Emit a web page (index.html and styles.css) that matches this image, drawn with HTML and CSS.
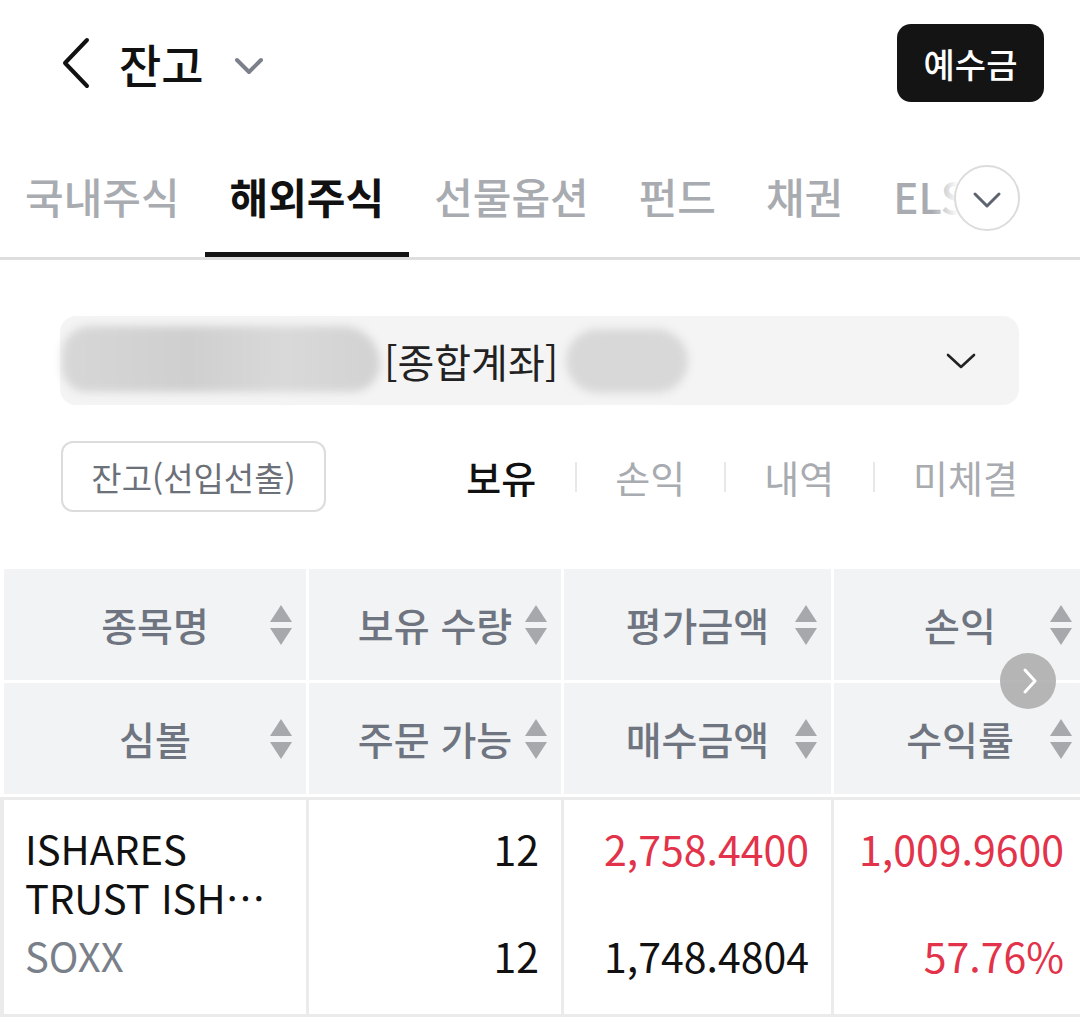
FILE: index.html
```html
<!DOCTYPE html>
<html lang="ko">
<head>
<meta charset="utf-8">
<title>잔고</title>
<link rel="stylesheet" href="styles.css">
</head>
<body>
<div class="app">
  <header class="topbar">
    <div class="topbar-left">
      <svg class="back" width="30" height="52" viewBox="0 0 30 52"><path d="M26 3 L4 26 L26 49" fill="none" stroke="#111" stroke-width="4" stroke-linecap="round" stroke-linejoin="round"/></svg>
      <h1 class="title">잔고</h1>
      <svg class="title-caret" width="30" height="18" viewBox="0 0 30 18"><path d="M3 3 L15 15 L27 3" fill="none" stroke="#7b818b" stroke-width="4" stroke-linecap="round" stroke-linejoin="round"/></svg>
    </div>
    <button class="deposit">예수금</button>
  </header>

  <nav class="tabs">
    <div class="tab-list">
      <span class="tab">국내주식</span>
      <span class="tab active">해외주식</span>
      <span class="tab">선물옵션</span>
      <span class="tab">펀드</span>
      <span class="tab">채권</span>
      <span class="tab">ELS</span>
      <span class="tab">RP</span>
    </div>
    <div class="tab-fade"></div>
    <button class="tab-more"><svg width="30" height="18" viewBox="0 0 30 18"><path d="M3 3 L15 15 L27 3" fill="none" stroke="#5d6470" stroke-width="3" stroke-linecap="round" stroke-linejoin="round"/></svg></button>
  </nav>

  <div class="account">
    <span class="blur blur-a"></span>
    <span class="account-name">[종합계좌]</span>
    <span class="blur blur-b"></span>
    <svg class="account-caret" width="32" height="18" viewBox="0 0 32 18"><path d="M3 3 L16 15 L29 3" fill="none" stroke="#222" stroke-width="2.6" stroke-linecap="round" stroke-linejoin="round"/></svg>
  </div>

  <div class="filters">
    <button class="fifo">잔고(선입선출)</button>
    <div class="seg">
      <span class="seg-item active">보유</span>
      <span class="seg-sep"></span>
      <span class="seg-item">손익</span>
      <span class="seg-sep"></span>
      <span class="seg-item">내역</span>
      <span class="seg-sep"></span>
      <span class="seg-item">미체결</span>
    </div>
  </div>

  <div class="table-wrap">
    <div class="table">
      <div class="row head">
        <div class="hcell"><span>종목명</span><i class="sort"></i></div>
        <div class="hcell"><span>보유 수량</span><i class="sort"></i></div>
        <div class="hcell"><span>평가금액</span><i class="sort"></i></div>
        <div class="hcell"><span>손익</span><i class="sort"></i></div>
      </div>
      <div class="row head">
        <div class="hcell"><span>심볼</span><i class="sort"></i></div>
        <div class="hcell"><span>주문 가능</span><i class="sort"></i></div>
        <div class="hcell"><span>매수금액</span><i class="sort"></i></div>
        <div class="hcell"><span>수익률</span><i class="sort"></i></div>
      </div>
      <div class="row data">
        <div class="dcell name-cell">
          <div class="name-line">ISHARES</div>
          <div class="name-line clip">TRUST ISHARES SEMICONDUCTOR ETF</div>
          <div class="symbol">SOXX</div>
        </div>
        <div class="dcell num-cell">
          <div class="v1">12</div>
          <div class="v2">12</div>
        </div>
        <div class="dcell num-cell">
          <div class="v1 up">2,758.4400</div>
          <div class="v2">1,748.4804</div>
        </div>
        <div class="dcell num-cell">
          <div class="v1 up">1,009.9600</div>
          <div class="v2 up">57.76%</div>
        </div>
      </div>
    </div>
    <span class="scroll-next"><svg width="20" height="30" viewBox="0 0 20 30"><path d="M5 4 L15 15 L5 26" fill="none" stroke="#fff" stroke-width="3" stroke-linecap="round" stroke-linejoin="round"/></svg></span>
  </div>
</div>
</body>
</html>
```

FILE: styles.css
```css
* { box-sizing: border-box; }

html, body {
  margin: 0;
  padding: 0;
  background: #fff;
}

body {
  font-family: "Noto Sans CJK KR", "Noto Sans", sans-serif;
  color: #111;
  width: 1080px;
  overflow: hidden;
}

.app {
  width: 1080px;
}

/* top bar */
.topbar {
  height: 130px;
  padding: 0 36px 4px 61px;
  display: flex;
  align-items: center;
  justify-content: space-between;
}

.topbar-left {
  display: flex;
  align-items: center;
}

.back {
  display: block;
}

.title {
  margin: 0 0 0 28px;
  font-size: 46px;
  line-height: 1;
  font-weight: 500;
  color: #111;
}

.title-caret {
  display: block;
  margin: 6px 0 0 30px;
}

.deposit {
  width: 147px;
  height: 78px;
  border: none;
  border-radius: 14px;
  background: #141414;
  color: #fff;
  font-family: inherit;
  font-size: 34px;
  font-weight: 500;
  padding: 0;
}

/* tabs */
.tabs {
  position: relative;
  height: 130px;
  padding-top: 3px;
  border-bottom: 3px solid #dedede;
  overflow: hidden;
}

.tab-list {
  display: flex;
  height: 100%;
}

.tab {
  position: relative;
  display: flex;
  align-items: center;
  padding: 0 25px;
  font-size: 42px;
  font-weight: 500;
  color: #a8abb0;
  white-space: nowrap;
}

.tab.active {
  color: #111;
  font-weight: 700;
}

.tab.active::after {
  content: "";
  position: absolute;
  left: 0;
  right: 0;
  bottom: 0;
  height: 5px;
  background: #141414;
}

.tab-fade {
  position: absolute;
  top: 0;
  bottom: 0;
  left: 932px;
  right: 0;
  background: linear-gradient(to right, rgba(255,255,255,0) 0, #fff 26px, #fff 100%);
}

.tab-more {
  position: absolute;
  left: 954px;
  top: 35px;
  width: 66px;
  height: 66px;
  border-radius: 50%;
  border: 2px solid #dcdcdc;
  background: #fff;
  padding: 3px 0 0;
  display: flex;
  align-items: center;
  justify-content: center;
}

.tab-more svg {
  display: block;
}

/* account selector */
.account {
  margin: 56px 61px 0 60px;
  height: 89px;
  border-radius: 16px;
  background: #f4f4f4;
  display: flex;
  align-items: center;
  padding: 0 42px 0 2px;
}

.blur {
  display: block;
  height: 66px;
  background: linear-gradient(to right, #d7d7d7, #cfcfcf 40%, #d9d9d9 70%, #d2d2d2);
  filter: blur(4px);
}

.blur-a {
  width: 318px;
  border-radius: 30px 40px 30px 26px;
  margin-top: -4px;
}

.blur-b {
  width: 122px;
  height: 64px;
  margin-left: 8px;
  border-radius: 34px;
  background: #d8d8d8;
}

.account-name {
  margin-left: 4px;
  font-size: 40px;
  color: #222;
  line-height: 1;
}

.account-caret {
  margin-left: auto;
  display: block;
}

/* filters */
.filters {
  margin: 36px 62px 0 61px;
  height: 71px;
  display: flex;
  align-items: center;
  justify-content: space-between;
}

.fifo {
  width: 265px;
  height: 71px;
  border: 2px solid #dcdcdc;
  border-radius: 12px;
  background: #fff;
  font-family: inherit;
  font-size: 33px;
  color: #6b7079;
  padding: 0;
}

.seg {
  display: flex;
  align-items: center;
}

.seg-item {
  font-size: 38px;
  font-weight: 400;
  color: #a8abb0;
  line-height: 1;
}

.seg-item.active {
  color: #111;
  font-weight: 500;
}

.seg-sep {
  width: 2px;
  height: 30px;
  background: #e8e8e8;
  margin: 0 38px 0 39px;
}

/* table */
.table-wrap {
  position: relative;
  margin-top: 57px;
  width: 1080px;
  overflow: hidden;
}

.table {
  width: 1090px;
  padding-left: 4px;
}

.row {
  display: grid;
  grid-template-columns: 302px 252px 267px 252px;
  column-gap: 3px;
}

.row.head {
  height: 111px;
  margin-bottom: 3px;
}

.hcell {
  position: relative;
  background: #f2f3f4;
  display: flex;
  align-items: center;
  justify-content: center;
  font-size: 39px;
  color: #6f7580;
  font-weight: 500;
}

.hcell span {
  line-height: 1;
}

.sort {
  position: absolute;
  right: 14px;
  top: 50%;
  margin-top: -20px;
  width: 22px;
  height: 40px;
}

.sort::before,
.sort::after {
  content: "";
  position: absolute;
  left: 0;
  width: 0;
  height: 0;
  border-left: 11px solid transparent;
  border-right: 11px solid transparent;
}

.sort::before {
  top: 0;
  border-bottom: 17px solid #a6a8ab;
}

.sort::after {
  bottom: 0;
  border-top: 17px solid #a6a8ab;
}

.row.data {
  margin-top: 2px;
  background: #ebebeb;
  padding: 3px 0;
  margin-left: -4px;
  padding-left: 4px;
  width: 1090px;
}

.dcell {
  background: #fff;
  height: 214px;
  padding-top: 19px;
  font-size: 41px;
  line-height: 59px;
  color: #111;
}

.name-cell {
  padding-left: 21px;
  padding-right: 28px;
  font-size: 40px;
}

.name-line {
  white-space: nowrap;
}

.name-line + .name-line {
  margin-top: -10px;
}

.clip {
  overflow: hidden;
  text-overflow: ellipsis;
}

.symbol {
  margin-top: -1px;
  color: #7a808a;
}

.num-cell {
  text-align: right;
  padding-right: 22px;
}

.num-cell .v2 {
  margin-top: 48px;
}

.up {
  color: #e2334a;
}

.scroll-next {
  position: absolute;
  left: 1000px;
  top: 84px;
  width: 56px;
  height: 56px;
  border-radius: 50%;
  background: rgba(165, 165, 165, 0.8);
  display: flex;
  align-items: center;
  justify-content: center;
  padding-left: 3px;
}

.scroll-next svg {
  display: block;
}
```
